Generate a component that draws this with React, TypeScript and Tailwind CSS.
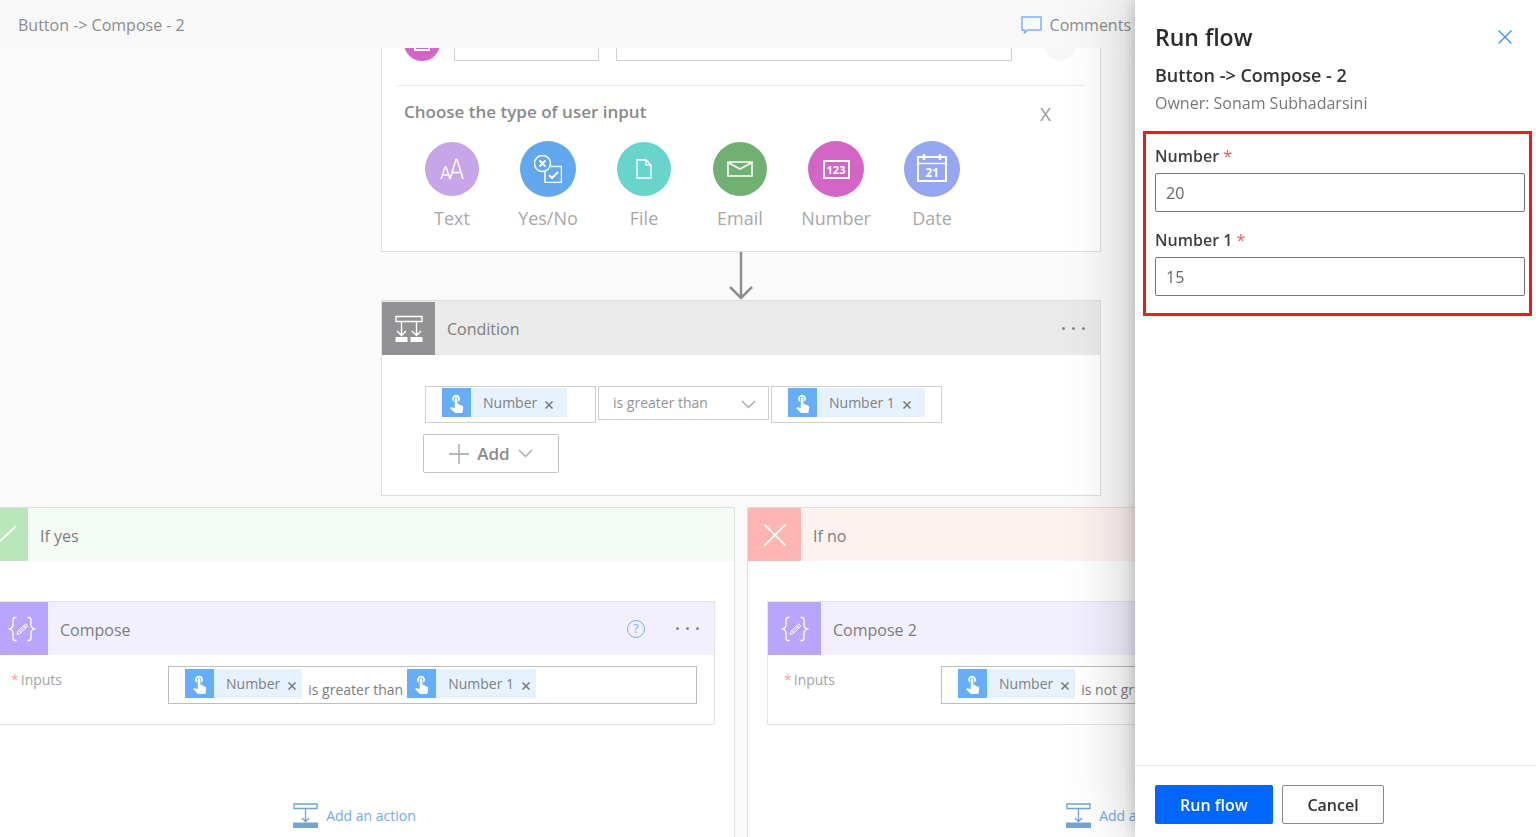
import { useState } from 'react';
import type { ReactNode } from 'react';
import { MdTouchApp } from 'react-icons/md';
import clsx from 'clsx';

const YesNoIcon = () => (
  <svg width="28" height="28" viewBox="0 0 28 28" fill="none" stroke="white" strokeWidth="1.5">
    <circle cx="8.5" cy="8.5" r="8" />
    <path d="M5.5 5.5l6 6M11.5 5.5l-6 6" strokeWidth="2" />
    <path d="M17 11.5h10.500v16h-16.500v-10.500" />
    <path d="M15 20l3 3 6-6" strokeWidth="2" />
  </svg>
);

const TextIcon = () => (
  <svg width="24" height="22" viewBox="0 0 24 22" fill="none" stroke="white" strokeWidth="1.5">
    <path d="M1 21L5 9h1l4 12M2.500 17h6M10 21L16 1.500h1L23 21M12 14.500h9" />
  </svg>
);

const FileIcon = () => (
  <svg width="16" height="20" viewBox="0 0 16 20" fill="none" stroke="white" strokeWidth="1.3">
    <path d="M1 1h9l5 5v13H1zM10 1v5h5" />
  </svg>
);

const EmailIcon = () => (
  <svg width="26" height="16" viewBox="0 0 26 16" fill="none" stroke="white" strokeWidth="1.6">
    <path d="M1 1h24v14H1zM1 1.500l12 6.500 12-6.500" />
  </svg>
);

const NumberIcon = () => (
  <span className="flex h-[19px] w-[27px] items-center justify-center border-2 border-white text-[11px] leading-none font-bold text-white">
    123
  </span>
);

const DateIcon = () => (
  <span className="relative flex h-[26px] w-[30px] items-center justify-center border-2 border-white pt-[7px] text-xs leading-none font-bold text-white">
    <svg className="absolute -top-1 -left-0.5" width="30" height="12" viewBox="0 0 30 12" stroke="white" fill="none">
      <path d="M7 0v6M23 0v6" strokeWidth="2.500" />
      <path d="M0 9.500h30" strokeWidth="1.500" />
    </svg>
    21
  </span>
);

const ConditionIcon = () => (
  <svg width="28" height="28" viewBox="0 0 28 28" fill="none" stroke="white" strokeWidth="1.4">
    <path d="M1 1.500h26v5H1z" />
    <path d="M6.500 7v13M2 16l4.500 4.500L11 16M21.500 7v13M17 16l4.500 4.500L26 16" />
    <path d="M.5 22h12v5H.5zM15.500 22h12v5h-12z" fill="white" stroke="none" />
  </svg>
);

const ComposeIcon = () => (
  <svg width="28" height="26" viewBox="0 0 28 26" fill="none" stroke="white" strokeWidth="1.3">
    <path d="M8.500 1.500H7q-2 0-2 2.500v5q0 3-3.500 4 3.500 1 3.500 4v5q0 2.500 2 2.500h1.500M19.500 1.500H21q2 0 2 2.500v5q0 3 3.500 4-3.500 1-3.500 4v5q0 2.500-2 2.500h-1.500" />
    <path d="M9 18.500l1-3.500 7.500-7q2 .5 2 2.500l-7.500 7zM10.500 14.500l2.500 2.500M11.500 16l6.500-6.500M15.500 9.500l2.500 2.500" strokeWidth="0.9" />
  </svg>
);

const AddActionIcon = () => (
  <svg width="25" height="25" viewBox="0 0 25 25" fill="none" stroke="#6ea3d6" strokeWidth="1.3">
    <path d="M1 1h23v4.500H1zM12.500 6v12.500M9 15l3.500 3.500L16 15" />
    <path d="M0 19.500h25V25H0z" fill="#77a5d2" stroke="none" />
  </svg>
);

const Chevron = ({ className }: { className?: string }) => (
  <svg className={className} width="15" height="9" viewBox="0 0 15 9" fill="none" stroke="#a6a6a6" strokeWidth="1.3">
    <path d="M1 1l6.500 6.500L14 1" />
  </svg>
);

const Cross = ({ size, width = 1.3 }: { size: number; width?: number }) => (
  <svg width={size} height={size} viewBox={`0 0 ${size} ${size}`} fill="none" stroke="currentColor" strokeWidth={width}>
    <path d={`M.5 .5L${size - 0.5} ${size - 0.5}M${size - 0.5} .5L.5 ${size - 0.5}`} />
  </svg>
);

const inputTypes = [
  { label: 'Text', icon: TextIcon, color: 'bg-[#c6a6e8]', size: 'size-[54px]' },
  { label: 'Yes/No', icon: YesNoIcon, color: 'bg-[#62a8ee]', size: 'size-14' },
  { label: 'File', icon: FileIcon, color: 'bg-[#68d4cc]', size: 'size-[54px]' },
  { label: 'Email', icon: EmailIcon, color: 'bg-[#70b072]', size: 'size-[54px]' },
  { label: 'Number', icon: NumberIcon, color: 'bg-[#d365c6]', size: 'size-14' },
  { label: 'Date', icon: DateIcon, color: 'bg-[#95a6f3]', size: 'size-14' },
];

function Token({ label, wide = false }: { label: string; wide?: boolean }) {
  return (
    <span className="flex h-[29px] shrink-0 items-center bg-[#e7f2ff] text-[#808080]">
      <span className="flex size-[29px] items-center justify-center bg-[#66aef7] text-white">
        <MdTouchApp size={21} />
      </span>
      <span className="pl-3 text-sm">{label}</span>
      <button
        type="button"
        aria-label={`Remove ${label}`}
        className={clsx('pt-1 pl-2 text-[#777]', wide ? 'pr-[14px]' : 'pr-1.5')}
      >
        <Cross size={8} width={1.5} />
      </button>
    </span>
  );
}

function MoreButton() {
  return (
    <button type="button" aria-label="More" className="flex gap-[7px] text-[#888]">
      <span className="size-[3px] rounded-full bg-current" />
      <span className="size-[3px] rounded-full bg-current" />
      <span className="size-[3px] rounded-full bg-current" />
    </button>
  );
}

function TriggerCard() {
  return (
    <section className="w-[720px] shrink-0 border border-t-0 border-[#dedede] bg-white px-[15px]">
      {/* last row of the trigger, scrolled under the header */}
      <div className="flex h-[13px] items-end pl-[7px]">
        <span className="flex size-9 shrink-0 items-end justify-center rounded-full bg-[#d365c6] pb-[10px]">
          <span className="h-3 w-4 border-2 border-white" />
        </span>
        <input aria-label="Input name" className="ml-[14px] h-9 w-[145px] shrink-0 border border-[#cfcfcf] bg-white" />
        <input aria-label="Input hint" className="ml-[17px] h-9 w-[396px] shrink-0 border border-[#cfcfcf] bg-white" />
        <span className="ml-8 size-8 shrink-0 rounded-full bg-[#f7f7f7]" />
      </div>
      <div className="mt-6 flex items-center justify-between border-t border-[#e9e9e9] pt-3 pr-[34px] pl-[7px]">
        <h2 className="text-[17px] leading-6 font-semibold text-[#8a8a8a]">Choose the type of user input</h2>
        <button type="button" aria-label="Close" className="pt-1 text-[19px] leading-6 text-[#999]">
          X
        </button>
      </div>
      <div className="flex pt-[15px] pb-[21px] pl-[7px]">
        {inputTypes.map(({ label, icon: Icon, color, size }) => (
          <button key={label} type="button" className="flex w-24 flex-col items-center gap-[9px]">
            <span className="flex size-14 items-center justify-center">
              <span className={clsx('flex items-center justify-center rounded-full', color, size)}>
                <Icon />
              </span>
            </span>
            <span className="text-lg leading-6 text-[#a8a8a8]">{label}</span>
          </button>
        ))}
      </div>
    </section>
  );
}

function ConditionCard() {
  return (
    <section className="w-[720px] shrink-0 border border-[#dedede] bg-white">
      <header className="flex h-[54px] items-center bg-[#eaeaea] pr-[15px]">
        <span className="flex size-[53px] items-center justify-center self-end bg-[#929295]">
          <ConditionIcon />
        </span>
        <h2 className="flex-1 pt-0.5 pl-3 text-base text-[#7d7d7d]">Condition</h2>
        <MoreButton />
      </header>
      <div className="px-[41px] pt-[31px] pb-[22px]">
        <div className="flex items-start gap-0.5 pl-0.5">
          <div className="flex h-[37px] w-[171px] items-start border border-[#cfcfcf] pt-px pl-4">
            <Token label="Number" wide />
          </div>
          <div className="relative">
            <select
              aria-label="Operator"
              className="h-[34px] w-[171px] appearance-none border border-[#cfcfcf] bg-white pl-[14px] text-sm text-[#949494]"
            >
              <option>is greater than</option>
              <option>is less than</option>
            </select>
            <Chevron className="pointer-events-none absolute top-[14px] right-[13px]" />
          </div>
          <div className="flex h-[37px] w-[171px] items-start border border-[#cfcfcf] pt-px pl-4">
            <Token label="Number 1" wide />
          </div>
        </div>
        <button
          type="button"
          className="mt-[11px] flex h-[39px] w-[136px] items-center justify-center gap-2 rounded-xs border border-[#c4c4c4] text-[17px] font-semibold text-[#8c8c8c]"
        >
          <svg width="20" height="20" viewBox="0 0 20 20" stroke="#a0a0a0" strokeWidth="1.3">
            <path d="M10 0v20M0 10h20" />
          </svg>
          Add
          <Chevron />
        </button>
      </div>
    </section>
  );
}

function ComposeCard({ title, children }: { title: string; children: ReactNode }) {
  return (
    <section className="border border-[#e4e4e4] bg-white">
      <header className="flex h-[53px] items-center bg-[#f2f0fe] pr-[15px]">
        <span className="flex size-[53px] items-center justify-center bg-[#b8a5ff]">
          <ComposeIcon />
        </span>
        <h3 className="flex-1 pt-0.5 pl-3 text-base text-[#7d7d7d]">{title}</h3>
        <button
          type="button"
          aria-label="Help"
          className="mr-[31px] flex size-[18px] items-center justify-center rounded-full border border-[#82aaf5] text-[13px] leading-none text-[#82aaf5]"
        >
          ?
        </button>
        <MoreButton />
      </header>
      <div className="flex items-start pt-[11px] pr-[17px] pb-5 pl-4">
        <span className="flex w-[157px] shrink-0 gap-0.5 pt-1 text-sm text-[#a3a3a3]">
          <span className="text-[#f7a49b]">*</span> Inputs
        </span>
        <div className="flex h-[38px] flex-1 items-start overflow-hidden border border-[#bdbdbd] pt-0.5 pl-4">{children}</div>
      </div>
    </section>
  );
}

interface BranchProps {
  title: string;
  icon: ReactNode;
  iconColor: string;
  headerColor: string;
  children: ReactNode;
}

function Branch({ title, icon, iconColor, headerColor, children }: BranchProps) {
  return (
    <section className="flex w-[761px] shrink-0 flex-col border border-b-0 border-[#dfdfdf] bg-white">
      <header className={clsx('flex h-[53px] shrink-0 items-center', headerColor)}>
        <span className={clsx('flex size-[53px] items-center justify-center text-white', iconColor)}>{icon}</span>
        <h2 className="pt-0.5 pl-3 text-base text-[#7d7d7d]">{title}</h2>
      </header>
      <div className="px-[19px] pt-10">{children}</div>
      <button type="button" className="mt-[78px] flex items-center gap-2 self-center text-sm text-[#73a9e6]">
        <AddActionIcon />
        Add an action
      </button>
    </section>
  );
}

function RunFlowPanel() {
  const [fields, setFields] = useState([
    { id: 'number', label: 'Number', value: '20' },
    { id: 'number-1', label: 'Number 1', value: '15' },
  ]);

  const updateField = (id: string, value: string) => {
    setFields(fields.map((field) => (field.id === id ? { ...field, value } : field)));
  };

  return (
    <aside className="fixed inset-y-0 right-0 flex w-[401px] flex-col bg-white shadow-[0_0_64px_rgba(0,0,0,0.26),0_0_14px_rgba(0,0,0,0.2)]">
      <div className="flex-1 pt-[19px]">
        <div className="flex items-center justify-between pr-6 pl-5">
          <h1 className="text-[23px] leading-9 font-semibold text-[#2b2b2b]">Run flow</h1>
          <button type="button" aria-label="Close panel" className="text-[#3a8cff]">
            <Cross size={14} />
          </button>
        </div>
        <p className="pt-1.5 pl-5 text-lg leading-7 font-semibold text-[#333]">{'Button -> Compose - 2'}</p>
        <p className="pl-5 text-base leading-7 text-[#767676]">Owner: Sonam Subhadarsini</p>
        <div className="mt-[14px] mr-1 ml-2 flex flex-col gap-4 border-3 border-[#ed1c24] pt-2.5 pr-1 pb-[17px] pl-[9px]">
          {fields.map((field) => (
            <div key={field.id}>
              <label htmlFor={field.id} className="block pb-1 text-base leading-[25px] font-semibold text-[#3f3f3f]">
                {field.label} <span className="font-normal text-[#e25b5b]">*</span>
              </label>
              <input
                id={field.id}
                value={field.value}
                onChange={(e) => updateField(field.id, e.target.value)}
                className="h-[39px] w-full rounded-xs border border-[#777] px-2.5 text-base text-[#666]"
              />
            </div>
          ))}
        </div>
      </div>
      <footer className="flex gap-[9px] border-t border-[#e8e8e8] px-5 pt-[19px] pb-[13px]">
        <button type="button" className="h-[39px] w-[118px] rounded-xs bg-[#0066ff] text-base font-semibold text-white">
          Run flow
        </button>
        <button type="button" className="h-[39px] w-[102px] rounded-xs border border-[#8a8a8a] text-base font-semibold text-[#333]">
          Cancel
        </button>
      </footer>
    </aside>
  );
}

export default function App() {
  return (
    <div className="flex h-screen flex-col overflow-hidden bg-[#fafafa] font-['Open_Sans','Noto_Sans',sans-serif]">
      <header className="flex h-12 shrink-0 items-center justify-between bg-[#f8f8f8] pt-0.5 pr-[405px] pl-[18px] text-[#8c8c8c]">
        <h1 className="text-base">{'Button -> Compose - 2'}</h1>
        <button type="button" className="flex items-center gap-2 text-base">
          <svg width="21" height="18" viewBox="0 0 21 18" fill="none" stroke="#7fb0fb" strokeWidth="1.5">
            <path d="M1 1h19v13H6.500L3.500 17v-3H1z" />
          </svg>
          Comments
        </button>
      </header>

      <main className="flex flex-1 flex-col items-center overflow-hidden pr-[54px]">
        <TriggerCard />
        <svg className="shrink-0" width="26" height="48" viewBox="0 0 26 48" fill="none" stroke="#8f8f8f" strokeWidth="2.500">
          <path d="M13 0v46M2 35l11 11 11-11" />
        </svg>
        <ConditionCard />
        <div className="flex flex-1 gap-3 pt-[11px]">
          <Branch
            title="If yes"
            iconColor="bg-[#b9e7b9]"
            headerColor="bg-[#f3fbf4]"
            icon={
              <svg width="30" height="22" viewBox="0 0 30 22" fill="none" stroke="white" strokeWidth="1.8">
                <path d="M1 11l9 9L29 2" />
              </svg>
            }
          >
            <ComposeCard title="Compose">
              <Token label="Number" />
              <span className="pt-[9px] pr-1 pl-1.5 text-sm leading-6 text-[#7d7d7d]">is greater than</span>
              <Token label="Number 1" />
            </ComposeCard>
          </Branch>
          <Branch title="If no" iconColor="bg-[#fdb6b2]" headerColor="bg-[#fef2f1]" icon={<Cross size={22} width={1.6} />}>
            <ComposeCard title="Compose 2">
              <Token label="Number" />
              <span className="pt-[9px] pr-1 pl-1.5 text-sm leading-6 whitespace-nowrap text-[#7d7d7d]">is not greater than</span>
              <Token label="Number 1" />
            </ComposeCard>
          </Branch>
        </div>
      </main>

      <RunFlowPanel />
    </div>
  );
}
